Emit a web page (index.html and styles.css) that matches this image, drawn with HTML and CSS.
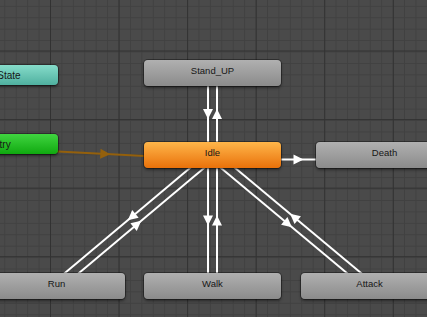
FILE: index.html
```html
<!DOCTYPE html>
<html lang="en">
<head>
    <meta charset="UTF-8">
    <meta name="viewport" content="width=device-width, initial-scale=1.0">
    <title>Animator</title>
    <link rel="stylesheet" href="styles.css">
</head>
<body>
    <div class="graph">
        <!-- transitions, drawn between node centres -->
        <svg class="links" width="427" height="317" viewBox="0 0 427 317">
            <g class="entry-link">
                <line x1="-1.7" y1="148.5" x2="212.3" y2="159.5"/>
                <polygon points="5,0 -5,-5 -5,5" transform="translate(105.3 154) rotate(2.94)"/>
            </g>
            <g class="link">
                <!-- Stand_UP -->
                <line x1="217" y1="155" x2="217" y2="73"/>
                <polygon points="5,0 -5,-5 -5,5" transform="translate(217 114) rotate(-90)"/>
                <line x1="208" y1="73" x2="208" y2="155"/>
                <polygon points="5,0 -5,-5 -5,5" transform="translate(208 114) rotate(90)"/>
                <!-- Walk -->
                <line x1="208" y1="155" x2="208" y2="286"/>
                <polygon points="5,0 -5,-5 -5,5" transform="translate(208 220.5) rotate(90)"/>
                <line x1="217" y1="286" x2="217" y2="155"/>
                <polygon points="5,0 -5,-5 -5,5" transform="translate(217 220.5) rotate(-90)"/>
                <!-- Death -->
                <line x1="212.5" y1="159.5" x2="384.5" y2="159.5"/>
                <polygon points="5,0 -5,-5 -5,5" transform="translate(298.5 159.5)"/>
                <!-- Run -->
                <line x1="209.6" y1="151.6" x2="53.6" y2="282.6"/>
                <polygon points="5,0 -5,-5 -5,5" transform="translate(131.6 217.1) rotate(139.98)"/>
                <line x1="59.4" y1="289.4" x2="215.4" y2="158.4"/>
                <polygon points="5,0 -5,-5 -5,5" transform="translate(137.4 223.9) rotate(-40.02)"/>
                <!-- Attack -->
                <line x1="209.6" y1="158.5" x2="366.6" y2="289.5"/>
                <polygon points="5,0 -5,-5 -5,5" transform="translate(288.1 224) rotate(39.84)"/>
                <line x1="372.4" y1="282.5" x2="215.4" y2="151.5"/>
                <polygon points="5,0 -5,-5 -5,5" transform="translate(293.9 217) rotate(-140.16)"/>
            </g>
        </svg>

        <div class="node small any-state" style="left: -60px; top: 65px;">Any State</div>
        <div class="node small entry" style="left: -60px; top: 134px;">Entry</div>

        <div class="node" style="left: 144px; top: 60px;">Stand_UP</div>
        <div class="node idle" style="left: 144px; top: 142px;">Idle</div>
        <div class="node" style="left: 316px; top: 142px;">Death</div>

        <div class="node" style="left: -12px; top: 273px;">Run</div>
        <div class="node" style="left: 144px; top: 273px;">Walk</div>
        <div class="node" style="left: 301px; top: 273px;">Attack</div>
    </div>
</body>
</html>
```

FILE: styles.css
```css
body {
    margin: 0;
    padding: 0;
    overflow: hidden;
    font-family: "Liberation Sans", Arial, sans-serif;
}

.graph {
    position: relative;
    width: 427px;
    height: 317px;
    overflow: hidden;
    background-color: #4a4a4a;
    background-image:
        linear-gradient(90deg, #323232 1px, transparent 1px),
        linear-gradient(0deg, #323232 1px, transparent 1px),
        linear-gradient(90deg, #414141 1px, transparent 1px),
        linear-gradient(0deg, #414141 1px, transparent 1px);
    background-size:
        68.57px 68.57px,
        68.57px 68.57px,
        11.43px 11.43px,
        11.43px 11.43px;
    background-position:
        50px 0,
        0 51.5px,
        4.3px 0,
        0 6.8px;
}

.links {
    position: absolute;
    left: 0;
    top: 0;
}

.link line {
    stroke: #fff;
    stroke-width: 2;
}

.link polygon {
    fill: #fff;
}

.entry-link line {
    stroke: #94600c;
    stroke-width: 2;
}

.entry-link polygon {
    fill: #94600c;
}

.node {
    position: absolute;
    width: 137px;
    height: 26px;
    box-sizing: border-box;
    padding-bottom: 6px;
    display: flex;
    align-items: center;
    justify-content: center;
    border-radius: 4px;
    background: linear-gradient(#b0b0b0, #8b8b8b);
    box-shadow: 0 0 0 1px rgba(0, 0, 0, 0.35), 0 2px 3px rgba(0, 0, 0, 0.45);
    color: #161616;
    font-size: 9.5px;
}

.node.small {
    width: 118px;
    height: 20px;
    padding-bottom: 0;
    font-size: 10px;
}

.node.idle {
    background: linear-gradient(#ffb64a, #e9710a);
}

.node.any-state {
    background: linear-gradient(#86dcca, #4fb09f);
}

.node.entry {
    background: linear-gradient(#40d540, #10a910);
}
```
